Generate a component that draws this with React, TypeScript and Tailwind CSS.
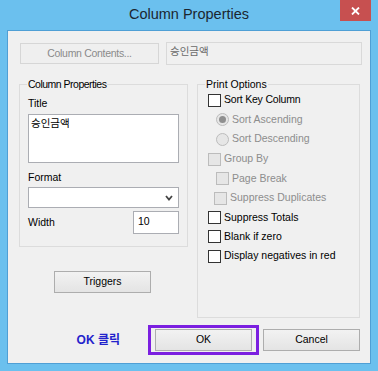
import React from "react";

const FONT = "font-['Liberation_Sans','Noto_Sans_CJK_KR',sans-serif]";

type Row = {
  label: string;
  kind: "check" | "radio";
  indent: string;
  disabled?: boolean;
  checked?: boolean;
  h: string;
};

const rows: Row[] = [
  { label: "Sort Key Column", kind: "check", indent: "ml-0", h: "h-[20px]" },
  { label: "Sort Ascending", kind: "radio", indent: "ml-[8px]", disabled: true, checked: true, h: "h-[19px]" },
  { label: "Sort Descending", kind: "radio", indent: "ml-[8px]", disabled: true, h: "h-[20px]" },
  { label: "Group By", kind: "check", indent: "ml-0", disabled: true, h: "h-[20px]" },
  { label: "Page Break", kind: "check", indent: "ml-[8px]", disabled: true, h: "h-[19px]" },
  { label: "Suppress Duplicates", kind: "check", indent: "ml-[6px]", disabled: true, h: "h-[20px]" },
  { label: "Suppress Totals", kind: "check", indent: "ml-0", h: "h-[19px]" },
  { label: "Blank if zero", kind: "check", indent: "ml-0", h: "h-[19px]" },
  { label: "Display negatives in red", kind: "check", indent: "ml-0", h: "h-[20px]" },
];

const Mark = ({ row }: { row: Row }) => {
  if (row.kind === "radio") {
    return (
      <span className="w-[13px] h-[13px] rounded-full border border-[#bcbcbc] bg-[#e6e6e6] flex items-center justify-center shrink-0">
        {row.checked && <span className="w-[7px] h-[7px] rounded-full bg-[#8f8f8f]" />}
      </span>
    );
  }
  return (
    <span
      className={`w-[13px] h-[13px] border shrink-0 ${
        row.disabled ? "border-[#bcbcbc] bg-[#e6e6e6]" : "border-[#333333] bg-white"
      }`}
    />
  );
};

const btn =
  "h-[22px] w-[97px] border border-[#adadad] bg-linear-to-b from-[#f2f2f2] to-[#e4e4e4] flex items-center justify-center text-black";

export default function App() {
  return (
    <div className={`w-[378px] h-[371px] bg-[#6bc0ee] flex flex-col px-[7px] pb-[7px] text-[10.5px] text-black ${FONT}`}>
      {/* title bar */}
      <div className="relative h-[30px] flex items-center justify-center">
        <span className="text-[14.5px] text-[#1b2630]">Column Properties</span>
        <div className="absolute top-0 right-0 w-[31px] h-[21px] bg-[#c75050] flex items-center justify-center">
          <svg width="9" height="8" viewBox="0 0 9 8">
            <path d="M1 0.5 L8 7.5 M8 0.5 L1 7.5" stroke="#fff" strokeWidth="1.8" />
          </svg>
        </div>
      </div>

      <div className="flex-1 border border-[#4f9fd5] bg-[#f0f0f0] flex flex-col">
        {/* contents row */}
        <div className="mt-[11px] pl-[12px] pr-[8px] flex items-center gap-[7px]">
          <div className="w-[139px] h-[21px] border border-[#d6d6d6] bg-[#efefef] flex items-center justify-center text-[#8a8a8a] tracking-[-0.3px]">
            Column Contents...
          </div>
          <div className="flex-1 h-[23px] border border-[#d9d9d9] bg-[#f0f0f0] pl-[3px] pt-[1px] leading-[14px] text-[#6a6a6a]">
            승인금액
          </div>
        </div>

        {/* groups */}
        <div className="mt-[13px] pl-[11px] pr-[10px] flex items-start gap-[9px]">
          <div className="w-[169px] flex flex-col">
            <fieldset className="border border-[#dcdcdc] px-[8px] pb-[12px]">
              <legend className="-ml-[1px] px-[1px] leading-[12px] tracking-[-0.5px]">Column Properties</legend>
              <div className="mt-[6px] leading-[14px]">Title</div>
              <div className="mt-[4px] h-[49px] border border-[#abadb3] bg-white px-[2px] pt-[1px] leading-[14px]">
                승인금액
              </div>
              <div className="mt-[7px] leading-[14px]">Format</div>
              <div className="mt-[3px] h-[21px] border border-[#abadb3] bg-white flex items-center justify-end pr-[5px]">
                <svg width="8" height="6" viewBox="0 0 8 6">
                  <path d="M1 1 L4 4.5 L7 1" stroke="#444" strokeWidth="1.8" fill="none" />
                </svg>
              </div>
              <div className="mt-[3px] flex items-center justify-between">
                <span>Width</span>
                <div className="w-[46px] h-[23px] border border-[#abadb3] bg-white pl-[4px] pt-[2px] leading-[14px]">10</div>
              </div>
            </fieldset>
            <div className={`${btn} mt-[24px] ml-[35px] border-[#4a9be0]`}>Triggers</div>
          </div>

          <fieldset className="flex-1 border border-[#dcdcdc] pl-[10px] pb-[51px]">
            <legend className="-ml-[3px] px-[1px] leading-[12px]">Print Options</legend>
            {rows.map((r) => (
              <div key={r.label} className={`flex items-center gap-[3px] ${r.h} ${r.indent}`}>
                <Mark row={r} />
                <span
                  className={`${r.disabled ? "text-[#8d8d8d]" : "text-black"} ${
                    r.label === "Sort Key Column" ? "tracking-[-0.2px]" : ""
                  }`}
                >
                  {r.label}
                </span>
              </div>
            ))}
          </fieldset>
        </div>

        {/* bottom buttons */}
        <div className="mt-[11px] pr-[10px] flex items-center justify-end">
          <span className="mr-[35px] text-[12px] font-bold text-[#2323cc]">OK 클릭</span>
          <div className="relative">
            <div className="absolute -top-[4px] -bottom-[4px] -left-[7px] -right-[7px] border-[3px] border-[#7b1fe0]" />
            <div className={btn}>OK</div>
          </div>
          <div className={`${btn} ml-[11px]`}>Cancel</div>
        </div>
      </div>
    </div>
  );
}
